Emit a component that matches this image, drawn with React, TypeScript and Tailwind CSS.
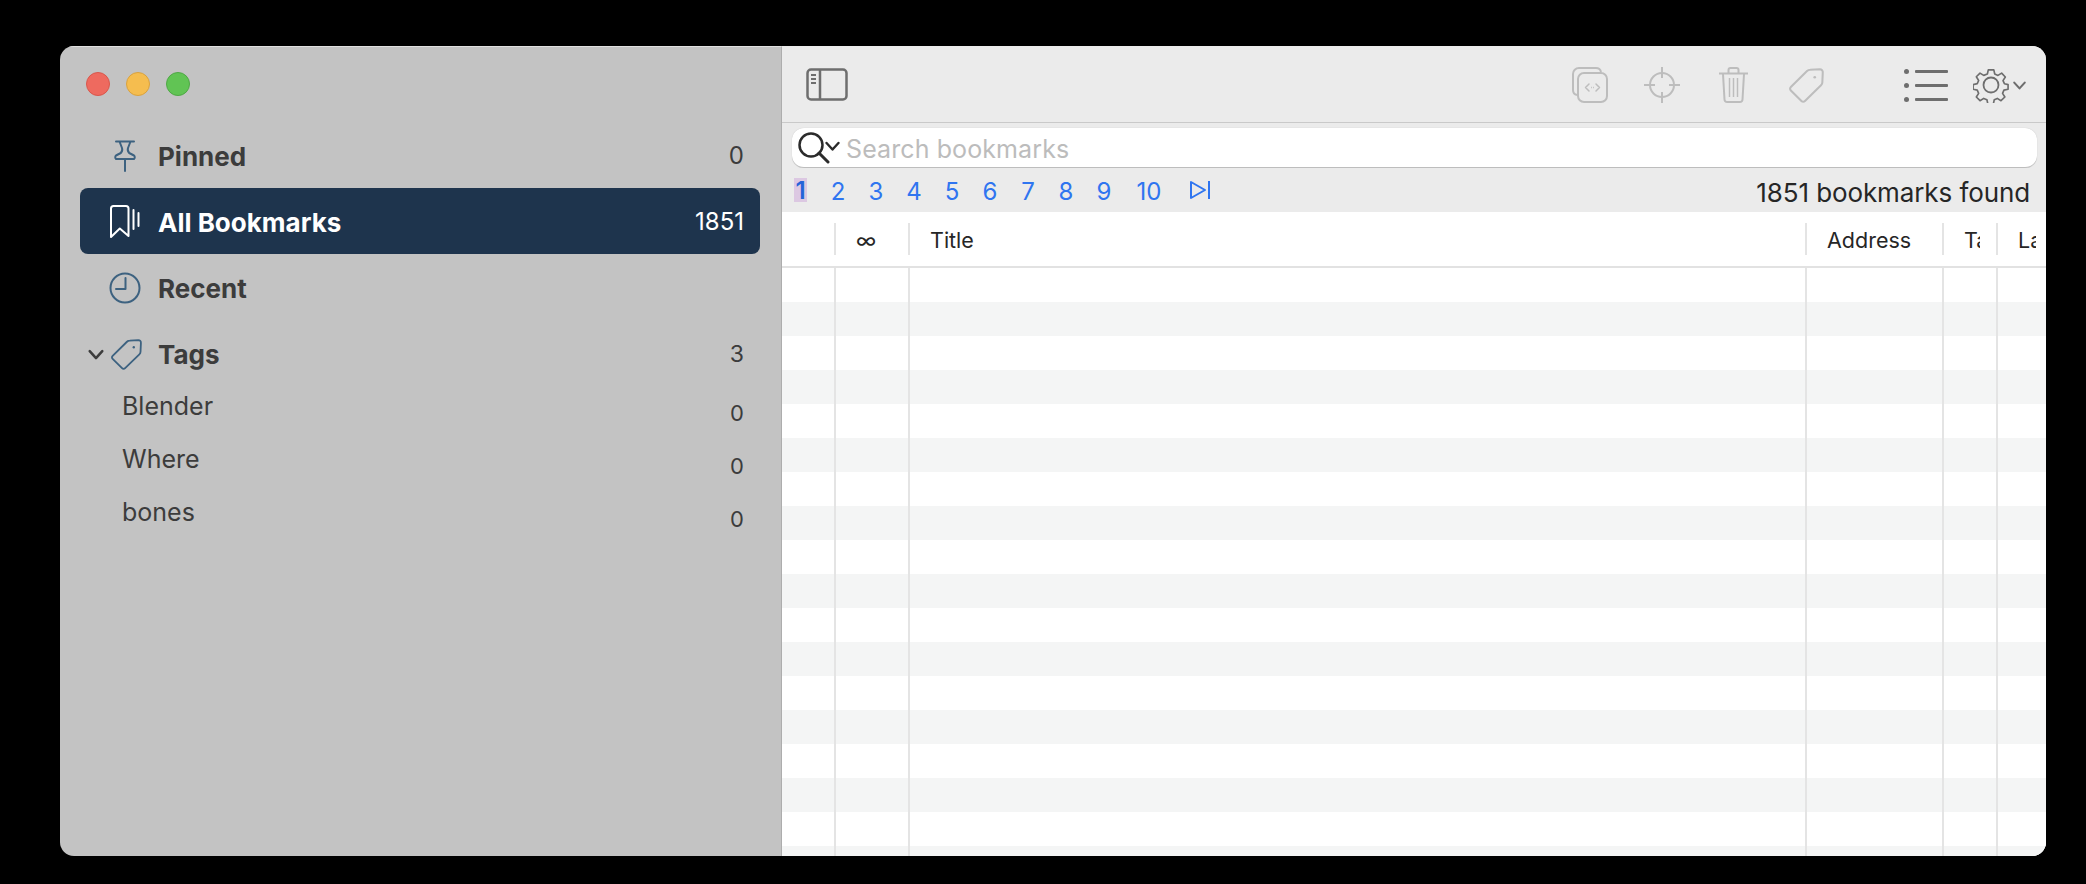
import React from 'react';

const columns = 'grid grid-cols-[52px_74px_897px_137px_54px_50px]';

function TrafficLights() {
  return (
    <div className="flex h-[75px] items-center gap-4 pb-px pl-[26px]">
      <div className="size-6 rounded-full border border-[#d9574c] bg-[#ee6a5f]" />
      <div className="size-6 rounded-full border border-[#d9a23f] bg-[#f5bd4f]" />
      <div className="size-6 rounded-full border border-[#4fa845] bg-[#61c454]" />
    </div>
  );
}

function PinIcon() {
  return (
    <svg width="24" height="32" viewBox="0 0 24 32" fill="none" stroke="#3d6280" strokeWidth="2" strokeLinejoin="round" strokeLinecap="round">
      <path d="M3 1.500h18M6.500 1.500 9 8c.6 1.800.2 3.500-1.200 5L3 15.500c-1 .7-1 3 0 3.500h18c1-.5 1-2.800 0-3.500L16.200 13C14.800 11.500 14.400 9.800 15 8l2.500-6.500" />
      <path d="M12 19v12" />
    </svg>
  );
}

function BookmarkIcon() {
  return (
    <svg width="32" height="34" viewBox="0 0 32 34" fill="none" stroke="#ffffff" strokeWidth="2" strokeLinejoin="round" strokeLinecap="round">
      <path d="M2 3.500C2 2 3 1 4.500 1H17c1.500 0 2.500 1 2.500 2.500V31l-8.700-7.500L2 32z" />
      <path d="M24.500 5v19M29.500 8v13" />
    </svg>
  );
}

function ClockIcon() {
  return (
    <svg width="32" height="32" viewBox="0 0 32 32" fill="none" stroke="#3d6280" strokeWidth="2" strokeLinecap="round" strokeLinejoin="round">
      <circle cx="16" cy="16" r="14.500" />
      <path d="M16.500 6v11H7" />
    </svg>
  );
}

function TagIcon({ color, width, height }: { color: string; width: number; height: number }) {
  return (
    <svg width={width} height={height} viewBox="0 0 34 34" fill="none" stroke={color} strokeWidth="2" strokeLinejoin="round">
      <path d="M1.800 18.500 17.500 3c.9-.9 1.800-1.300 3-1.300l9.500-.4c1.700 0 3 1.300 2.800 3l-.4 9.500c0 1.200-.4 2.200-1.300 3L15.500 32c-1 1-2.400 1-3.400 0l-10.300-10.200c-1-1-1-2.300 0-3.300Z" />
      <circle cx="25" cy="9" r="1.300" fill={color} stroke="none" />
    </svg>
  );
}

function Chevron({ color, size }: { color: string; size: number }) {
  return (
    <svg width={size} height={size * 0.7} viewBox="0 0 14 10" fill="none" stroke={color} strokeWidth="2" strokeLinecap="round" strokeLinejoin="round">
      <path d="M2 2.500 7 8l5-5.500" />
    </svg>
  );
}

function NavRow({ icon, label, count, active }: { icon: React.ReactNode; label: string; count: string; active?: boolean }) {
  return (
    <div className={`ml-5 mr-[21px] flex h-[66px] items-center rounded-lg pr-4 pt-[2px] ${active ? 'bg-[#1e344d] text-white' : 'text-[#3c3c3c]'}`}>
      <div className="flex w-[78px] justify-center pl-[12px]">{icon}</div>
      <span className="text-[26px] font-bold">{label}</span>
      <span className={`ml-auto text-[24px] ${active ? 'text-white' : 'text-[#3c3c3c]'}`}>{count}</span>
    </div>
  );
}

function TagRow({ label }: { label: string }) {
  return (
    <div className="ml-[62px] mr-[37px] flex h-[53px] items-start text-[#3c3c3c]">
      <span className="pt-[9px] text-[25px]">{label}</span>
      <span className="ml-auto pt-[18px] text-[22px]">0</span>
    </div>
  );
}

function Sidebar() {
  return (
    <aside className="flex w-[722px] shrink-0 flex-col border-r border-t border-r-[#adadad] border-t-[#e0e0e0] bg-[#c3c3c3]">
      <TrafficLights />
      <NavRow icon={<PinIcon />} label="Pinned" count="0" />
      <NavRow icon={<BookmarkIcon />} label="All Bookmarks" count="1851" active />
      <NavRow icon={<ClockIcon />} label="Recent" count="" />
      <div className="ml-5 mr-[37px] flex h-[66px] items-center pt-[2px] text-[#3c3c3c]">
        <div className="flex w-[78px] items-center pl-[7px]">
          <Chevron color="#3c3c3c" size={18} />
          <div className="ml-[6px]">
            <TagIcon color="#3d6280" width={31} height={31} />
          </div>
        </div>
        <span className="text-[26px] font-bold">Tags</span>
        <span className="ml-auto text-[23px]">3</span>
      </div>
      <div className="-mt-[7px]">
        <TagRow label="Blender" />
        <TagRow label="Where" />
        <TagRow label="bones" />
      </div>
    </aside>
  );
}

function Toolbar() {
  return (
    <div className="flex h-[77px] items-center border-b border-[#c9c9c9] bg-[#ebebeb] pl-6 pr-[19px]">
      <svg width="42" height="33" viewBox="0 0 42 33" fill="none" stroke="#6e6e6e" strokeWidth="2.500">
        <rect x="1.500" y="1.500" width="39" height="30" rx="3.500" />
        <path d="M14 1.500v30" />
        <path d="M5 7h5M5 11h5M5 15h5" strokeWidth="2" />
      </svg>
      <div className="ml-auto flex items-center pt-[2px]">
        <svg width="36" height="36" viewBox="0 0 36 36" fill="none" stroke="#bdbdbd" strokeWidth="2">
          <path d="M5 28c-2.500-.5-4-2.500-4-5V7c0-3.300 2.700-6 6-6h17c2.500 0 4.500 1.500 5 4" />
          <rect x="6" y="6" width="29" height="29" rx="6" />
          <path d="M17 17l-3.500 3.500L17 24M24 17l3.500 3.500L24 24" strokeWidth="1.500" strokeLinecap="round" strokeLinejoin="round" />
          <path d="M19 20.500h.8M21.200 20.500h.8" strokeWidth="1.500" />
        </svg>
        <svg className="ml-9" width="36" height="36" viewBox="0 0 36 36" fill="none" stroke="#bdbdbd" strokeWidth="2">
          <circle cx="18" cy="18" r="12" />
          <path d="M18 0v11M18 25v11M0 18h11M25 18h11" />
        </svg>
        <svg className="ml-[39px]" width="29" height="36" viewBox="0 0 29 36" fill="none" stroke="#bdbdbd" strokeWidth="2" strokeLinejoin="round">
          <path d="M0 6.500h29" />
          <path d="M9.500 6V3c0-1.200.8-2 2-2h6c1.200 0 2 .8 2 2v3" />
          <path d="M4 7l1.500 25.500c.1 1.600 1.200 2.500 2.700 2.500h12.600c1.500 0 2.600-.9 2.700-2.500L25 7" />
          <path d="M10.500 11v19M14.500 11v19M18.500 11v19" strokeWidth="1.500" />
        </svg>
        <div className="ml-[41px]">
          <TagIcon color="#bdbdbd" width={35} height={35} />
        </div>
        <svg className="ml-20" width="44" height="33" viewBox="0 0 44 33" fill="#6e6e6e">
          <circle cx="2.500" cy="2.500" r="2.500" />
          <circle cx="2.500" cy="16.500" r="2.500" />
          <circle cx="2.500" cy="30.500" r="2.500" />
          <rect x="11" y="1" width="33" height="3" rx="1" />
          <rect x="11" y="15" width="33" height="3" rx="1" />
          <rect x="11" y="29" width="33" height="3" rx="1" />
        </svg>
        <svg className="ml-[25px]" width="36" height="36" viewBox="0 0 36 36" fill="none" stroke="#6e6e6e" strokeWidth="1.800" strokeLinejoin="round">
          <circle cx="18" cy="18" r="7.500" />
          <path d="M15 1.500h6l1 4.500 3.500 1.500 4-2.500 4 4.200-2.500 4 1.500 3.300 4 1v5l-4.500 1-1.500 3.500 2.500 4-4.200 4-4-2.500-3.300 1.500-1 4.500h-6l-1-4.500-3.500-1.500-4 2.500-4-4 2.500-4-1.500-3.500-4.500-1v-5l4.500-1 1.500-3.500-2.500-4 4-4 4 2.500L14 6Z" transform="translate(1.500 1.500) scale(0.92)" />
        </svg>
        <div className="ml-[3px]">
          <Chevron color="#6e6e6e" size={15} />
        </div>
      </div>
    </div>
  );
}

function SearchField() {
  return (
    <div className="ml-[10px] mr-[9px] mt-[5px] flex h-10 items-center rounded-xl border-b border-[#bdbdbd] bg-white pl-[6px] shadow-[0_0_1px_rgba(0,0,0,0.2)]">
      <svg width="32" height="32" viewBox="0 0 32 32" fill="none" stroke="#2b2b2b" strokeWidth="2.500" strokeLinecap="round">
        <circle cx="13" cy="13" r="11.500" />
        <path d="M21 21 30 30" strokeWidth="3" />
      </svg>
      <div className="-ml-[6px] -mt-[4px]">
        <Chevron color="#2b2b2b" size={17} />
      </div>
      <span className="ml-[5px] pt-[4px] text-[25px] tracking-[0.1px] text-[#bcbcbc]">Search bookmarks</span>
    </div>
  );
}

function Pagination() {
  const pages = ['2', '3', '4', '5', '6', '7', '8', '9'];
  return (
    <div className="flex h-11 items-center bg-[#ebebeb] pr-4 text-[#2f75f0]">
      <div className="ml-3 flex h-6 w-[13px] items-center justify-center bg-[#dcc8e2] pt-[1px] text-[24px] font-semibold text-[#2563d8]">1</div>
      <div className="ml-[12px] flex pt-[4px] text-[24px]">
        {pages.map(page => (
          <span key={page} className="w-[38px] text-center">{page}</span>
        ))}
        <span className="ml-[7px] w-[38px] text-center">10</span>
      </div>
      <svg className="ml-[21px]" width="22" height="20" viewBox="0 0 22 20" fill="none" stroke="#2f75f0" strokeWidth="2" strokeLinejoin="round">
        <path d="M2 2v16l14-8zM20 1v18" />
      </svg>
      <span className="ml-auto pt-[4px] text-[26px] tracking-[-0.1px] text-[#262626]">1851 bookmarks found</span>
    </div>
  );
}

function BookmarkTable() {
  const rows = Array.from({ length: 18 }, (_, i) => i);
  const headers = [
    { label: '', pad: '' },
    { label: '∞', pad: 'pl-[20px]' },
    { label: 'Title', pad: 'pl-[20px]' },
    { label: 'Address', pad: 'pl-[20px]' },
    { label: 'Ta', pad: 'pl-[20px] pr-[16px]' },
    { label: 'La', pad: 'pl-[20px] pr-[10px]' },
  ];

  return (
    <div className="min-h-0 flex-1 overflow-hidden bg-white">
      <div className={`${columns} h-14 items-center border-b-2 border-[#e2e2e2]`}>
        {headers.map((header, i) => (
          <div key={i} className={`flex h-8 items-center overflow-hidden pt-[3px] text-[21.500px] text-[#262626] ${i > 0 ? 'border-l-2 border-[#e4e4e4]' : ''} ${header.pad}`}>
            <span className="overflow-hidden whitespace-nowrap">{header.label}</span>
          </div>
        ))}
      </div>
      {rows.map(row => (
        <div key={row} className={`${columns} h-[34px] ${row % 2 === 1 ? 'bg-[#f4f5f5]' : 'bg-white'}`}>
          <div />
          <div className="border-l-2 border-[#e4e4e4]" />
          <div className="border-l-2 border-[#e4e4e4]" />
          <div className="border-l-2 border-[#e4e4e4]" />
          <div className="border-l-2 border-[#e4e4e4]" />
          <div className="border-l-2 border-[#e4e4e4]" />
        </div>
      ))}
    </div>
  );
}

export default function App() {
  return (
    <div className="h-[884px] w-[2086px] overflow-hidden bg-black pl-[60px] pt-[46px] font-['Inter',sans-serif]">
      <div className="flex h-[810px] w-[1986px] overflow-hidden rounded-[14px]">
        <Sidebar />
        <main className="flex min-w-0 flex-1 flex-col bg-[#ebebeb]">
          <Toolbar />
          <SearchField />
          <Pagination />
          <BookmarkTable />
        </main>
      </div>
    </div>
  );
}
